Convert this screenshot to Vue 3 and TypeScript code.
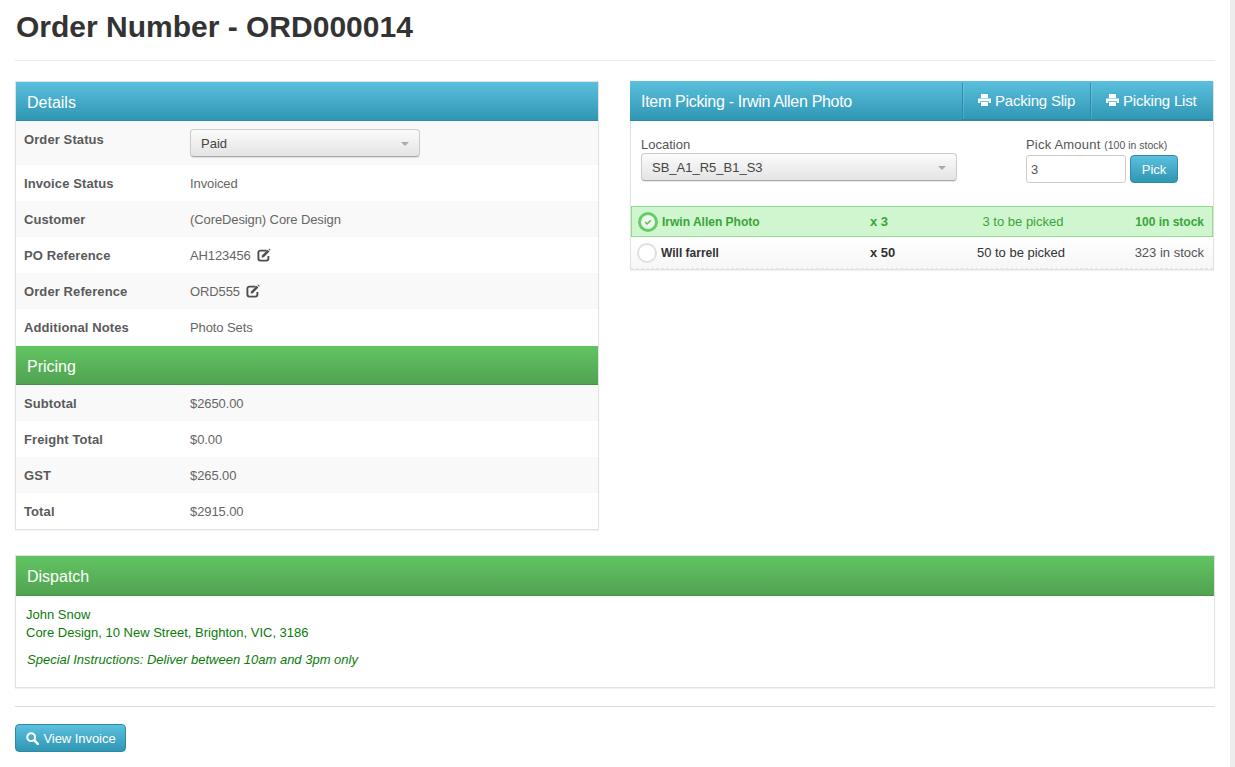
<script setup lang="ts">
interface Row { label: string; value: string; edit?: boolean }
const details: Row[] = [
  { label: 'Invoice Status', value: 'Invoiced' },
  { label: 'Customer', value: '(CoreDesign) Core Design' },
  { label: 'PO Reference', value: 'AH123456', edit: true },
  { label: 'Order Reference', value: 'ORD555', edit: true },
  { label: 'Additional Notes', value: 'Photo Sets' },
]
const pricing: Row[] = [
  { label: 'Subtotal', value: '$2650.00' },
  { label: 'Freight Total', value: '$0.00' },
  { label: 'GST', value: '$265.00' },
  { label: 'Total', value: '$2915.00' },
]
</script>

<template>
  <div class="page">
    <main class="main">
      <h1 class="title">Order Number - ORD000014</h1>
      <hr class="rule" />
      <div class="cols">
        <section class="panel">
          <header class="head blue"><span>Details</span></header>
          <div class="row status">
            <div class="label">Order Status</div>
            <div class="select paid"><span>Paid</span><i class="caret"></i></div>
          </div>
          <div v-for="r in details" :key="r.label" class="row">
            <div class="label">{{ r.label }}</div>
            <div class="value">
              {{ r.value }}
              <svg v-if="r.edit" class="edit" viewBox="0 0 14 14" width="14" height="14">
                <path d="M9.6 2.6H3.4A2 2 0 0 0 1.4 4.6v6a2 2 0 0 0 2 2h6a2 2 0 0 0 2-2V8" fill="none" stroke="#4f4f4f" stroke-width="1.9" />
                <path d="M5 7.4l5.6-5.6 1.8 1.8-5.6 5.6-2.2.4z" fill="#4f4f4f" />
                <path d="M11.4 1l.7-.6 1.6 1.6-.7.8z" fill="#4f4f4f" />
              </svg>
            </div>
          </div>
          <header class="head green pricing"><span>Pricing</span></header>
          <div v-for="r in pricing" :key="r.label" class="row">
            <div class="label">{{ r.label }}</div>
            <div class="value">{{ r.value }}</div>
          </div>
        </section>

        <section class="panel picking">
          <header class="head blue pick-head">
            <span class="pick-title">Item Picking - Irwin Allen Photo</span>
            <div class="head-btns">
              <a class="head-btn slip">
                <svg class="printer" viewBox="0 0 13 12" width="13" height="12"><path d="M3 0h7v4H3zM0 4.5h13V9h-2.2V7.2H2.2V9H0zM3 8h7v4H3z" fill="#fff" /></svg>
                Packing Slip
              </a>
              <a class="head-btn list">
                <svg class="printer" viewBox="0 0 13 12" width="13" height="12"><path d="M3 0h7v4H3zM0 4.5h13V9h-2.2V7.2H2.2V9H0zM3 8h7v4H3z" fill="#fff" /></svg>
                Picking List
              </a>
            </div>
          </header>
          <div class="pick-form">
            <div class="loc">
              <label class="flabel">Location</label>
              <div class="select wide"><span>SB_A1_R5_B1_S3</span><i class="caret"></i></div>
            </div>
            <div class="amount">
              <label class="flabel wideL">Pick Amount <small>(100 in stock)</small></label>
              <div class="amount-row">
                <div class="input">3</div>
                <a class="btn">Pick</a>
              </div>
            </div>
          </div>
          <div class="item done">
            <span class="circle on">
              <svg viewBox="0 0 10 10" width="8" height="8"><path d="M1.6 5.2l2.3 2.3 4.6-4.8" fill="none" stroke="#5cb85c" stroke-width="1.9" /></svg>
            </span>
            <b class="i-name">Irwin Allen Photo</b>
            <b class="i-qty">x 3</b>
            <span class="i-pick">3 to be picked</span>
            <b class="i-stock">100 in stock</b>
          </div>
          <div class="item todo">
            <span class="circle"></span>
            <b class="i-name">Will farrell</b>
            <b class="i-qty">x 50</b>
            <span class="i-pick">50 to be picked</span>
            <span class="i-stock">323 in stock</span>
          </div>
        </section>
      </div>

      <section class="panel dispatch">
        <header class="head green"><span>Dispatch</span></header>
        <div class="dispatch-body">
          <p class="addr">John Snow<br />Core Design, 10 New Street, Brighton, VIC, 3186</p>
          <p class="note">Special Instructions: Deliver between 10am and 3pm only</p>
        </div>
      </section>

      <hr class="rule bottom" />
      <a class="btn invoice">
        <svg viewBox="0 0 13 13" width="13" height="13"><circle cx="5.2" cy="5.2" r="3.9" fill="none" stroke="#fff" stroke-width="2" /><path d="M8.2 8.2l3.6 3.6" stroke="#fff" stroke-width="2.4" stroke-linecap="round" /></svg>
        View Invoice
      </a>
    </main>
    <div class="scrollbar"></div>
  </div>
</template>

<style>
html, body { margin: 0; background: #fff; overflow: hidden; }
</style>

<style scoped>
.page { display: flex; height: 767px; font-family: "Liberation Sans", Arial, sans-serif; font-size: 13px; color: #555; overflow: hidden; }
.main { width: 1200px; padding: 0 15px; flex: none; }
.scrollbar { width: 5px; margin-left: auto; background: #ededed; }
.title { margin: 0; padding: 10px 0 0 1px; height: 60px; box-sizing: border-box; font-size: 30px; line-height: 34px; font-weight: 700; color: #333; }
.rule { border: 0; border-top: 1px solid #e9e9e9; margin: 0; height: 0; }
.cols { display: grid; grid-template-columns: 584px 584px; column-gap: 31px; margin-top: 20px; align-items: start; }
.panel { border: 1px solid #e2e2e2; background: #fff; box-sizing: border-box; box-shadow: 0 1px 1px rgba(0,0,0,.05); }
.head { height: 39px; display: flex; align-items: center; padding: 4px 0 0 11px; color: #fff; font-size: 16px; box-sizing: border-box; }
.blue { background: linear-gradient(#5bc0de, #2f96b4); border-bottom: 1px solid #2f8aa6; }
.green { background: linear-gradient(#62c462, #51a351); border-bottom: 1px solid #479447; }
.pricing { margin-top: 1px; }
.row { display: flex; height: 36px; align-items: center; padding-left: 8px; }
.row:nth-of-type(odd) { background: #f9f9f9; }
.row.status { height: 44px; align-items: flex-start; background: #f9f9f9; padding-top: 11px; box-sizing: border-box; }
.label { width: 166px; font-weight: 700; color: #5a5a5a; letter-spacing: .1px; }
.value { color: #666; display: flex; align-items: center; gap: 6px; letter-spacing: -.1px; }
.select { display: flex; align-items: center; justify-content: space-between; height: 28px; box-sizing: border-box; padding: 1px 10px 0; border: 1px solid #ccc; border-bottom-color: #aaa; border-radius: 4px; background: linear-gradient(#fbfbfb, #e4e4e4); color: #444; box-shadow: 0 1px 1px rgba(0,0,0,.1); }
.paid { width: 230px; margin-top: -3px; }
.wide { width: 316px; }
.caret { width: 0; height: 0; border-left: 4px solid transparent; border-right: 4px solid transparent; border-top: 4px solid #aaa; }
.pick-head { padding: 0 0 0 11px; justify-content: space-between; align-items: flex-start; height: 40px; margin: -1px 0 0 -1px; width: calc(100% + 1px); }
.pick-title { align-self: center; letter-spacing: -.3px; padding-top: 2px; }
.head-btns { display: flex; margin-right: 1px; margin-top: 2px; }
.head-btn { display: flex; align-items: center; gap: 4px; height: 37px; box-sizing: border-box; padding: 0 0 2px 15px; border-left: 1px solid #2f8aa6; border-bottom: 1px solid #2f8aa6; box-shadow: inset 1px 0 rgba(255,255,255,.15); font-size: 15px; letter-spacing: -.2px; color: #fff; }
.slip { width: 128px; }
.list { width: 122px; }
.pick-form { display: flex; justify-content: space-between; padding: 16px 10px 0; height: 85px; box-sizing: border-box; }
.flabel { display: block; font-size: 13px; color: #555; line-height: 16px; }
.wideL { letter-spacing: .2px; white-space: nowrap; }
.flabel small { font-size: 10.5px; letter-spacing: 0; }
.amount { width: 176px; margin-right: 1px; }
.amount-row { display: flex; gap: 4px; margin-top: 2px; }
.input { width: 100px; height: 28px; box-sizing: border-box; border: 1px solid #ccc; border-radius: 3px; padding: 6px 4px; color: #555; }
.btn { display: inline-flex; align-items: center; justify-content: center; gap: 4px; height: 28px; box-sizing: border-box; border-radius: 4px; color: #fff; background: linear-gradient(#5bc0de, #2f96b4); border: 1px solid #2f8aa6; }
.amount-row .btn { width: 48px; }
.item { display: grid; grid-template-columns: 24px 209px 76px 154px 1fr; align-items: center; padding: 0 9px 0 6px; box-sizing: border-box; height: 31px; }
.item.done { background: #d0f6cf; outline: 1px solid #8fdc8c; outline-offset: -1px; color: #39a539; }
.item.todo { color: #333; height: 32px; background: linear-gradient(#fff, #f7f7f7); border-bottom: 1px dashed #e5e5e5; }
.i-name { font-size: 12px; }
.done .i-name { margin-left: 1px; }
.circle { width: 20px; height: 20px; box-sizing: border-box; border: 2px solid #e0e0e0; border-radius: 50%; background: #fff; display: flex; align-items: center; justify-content: center; }
.circle.on { border: 3.5px solid #66cc66; width: 20px; height: 20px; margin-left: 1px; background: #eef9ee; }
.i-pick { text-align: center; }
.todo .i-pick { margin-right: 4px; }
.i-stock { text-align: right; }
b.i-stock { font-size: 12px; }
.todo .i-stock { color: #555; }
.dispatch { margin-top: 25px; height: 133px; width: 1200px; }
.dispatch .head { height: 40px; padding-top: 2px; }
.dispatch-body { padding: 10px 10px; color: #0a7c0a; }
.addr { margin: 0; line-height: 18px; }
.note { margin: 9px 1px 0; line-height: 18px; font-style: italic; }
.rule.bottom { margin-top: 18px; border-top-color: #ddd; }
.invoice { margin-top: 17px; width: 111px; letter-spacing: -.05px; padding-left: 1px; }
</style>
